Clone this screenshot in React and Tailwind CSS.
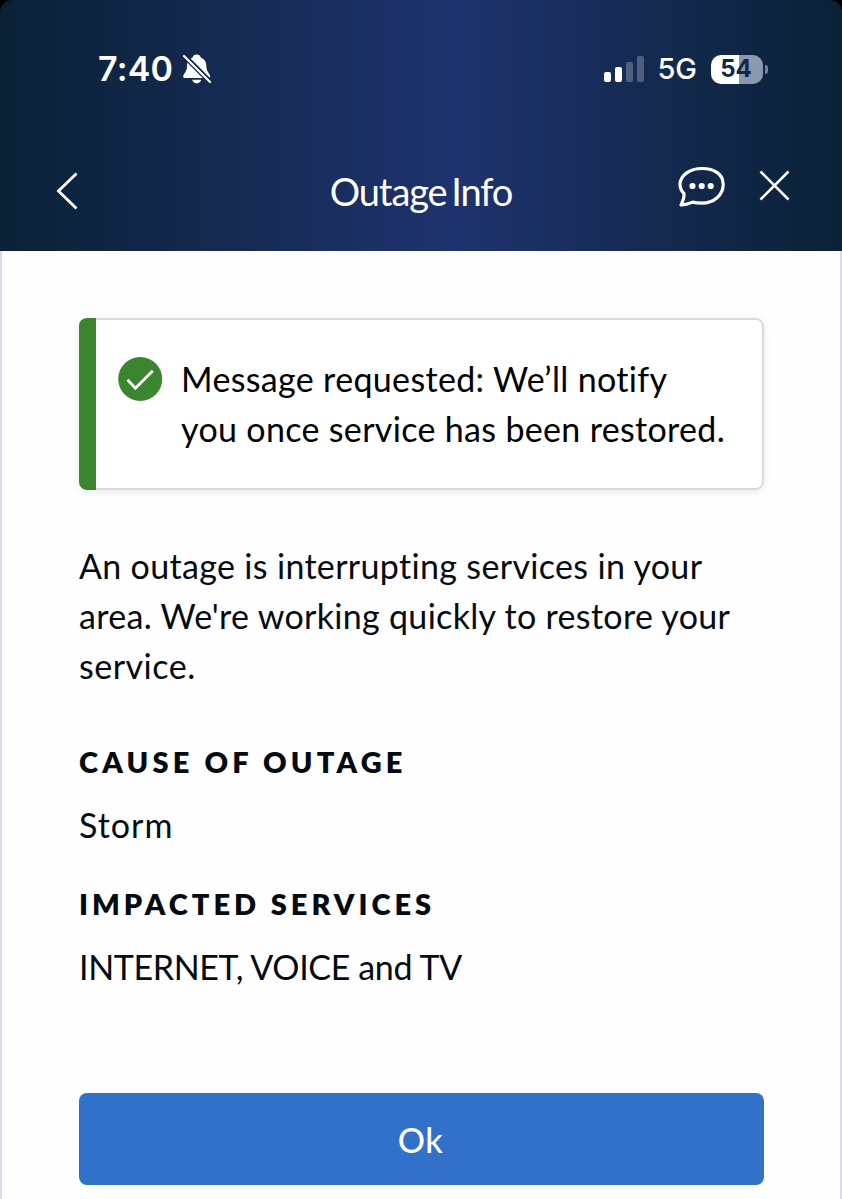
const details = [
  { title: 'CAUSE OF OUTAGE', value: 'Storm', titleClass: 'tracking-[4.2px]', valueClass: 'tracking-[1px]' },
  { title: 'IMPACTED SERVICES', value: 'INTERNET, VOICE and TV', titleClass: 'tracking-[4px]', valueClass: 'tracking-[-0.36px]' },
]

function StatusBar() {
  return (
    <div className="flex h-[138px] items-start justify-between pt-[49px] pr-[74px] pl-[98px] text-white">
      <div className="flex h-10 items-center gap-[9px]">
        <span className="font-['Inter'] text-[34px] leading-10 font-semibold tracking-[0.2px]">7:40</span>
        <svg width="30" height="32" viewBox="0 0 30 32" fill="none">
          <path d="M14.7 1.5c-2.2 0-3.7 1.2-4.1 3C6.6 6 5 9.3 5 13.400c0 5.600-3.800 6.800-3.800 10 0 1 .7 1.600 1.900 1.600h23.200c1.200 0 1.900-.6 1.900-1.600 0-3.200-3.800-4.400-3.800-10 0-4.100-1.600-7.400-5.600-8.900-.4-1.800-1.900-3-4.100-3z" fill="#fff" />
          <path d="M10.200 26.800h9c-.5 2.100-2.200 3.600-4.500 3.600s-4-1.500-4.500-3.600z" fill="#fff" />
          <path d="M1 1.600 28.500 29.100" stroke="#15284f" strokeWidth="5.200" />
          <path d="M2 3 28 29" stroke="#fff" strokeWidth="2.2" strokeLinecap="round" />
        </svg>
      </div>

      <div className="flex h-10 items-center">
        <div className="flex h-[26px] items-end gap-[4px]">
          <span className="h-[10px] w-[7px] rounded-[2px] bg-white" />
          <span className="h-[15px] w-[7px] rounded-[2px] bg-white" />
          <span className="h-[20px] w-[7px] rounded-[2px] bg-white/25" />
          <span className="h-[26px] w-[7px] rounded-[2px] bg-white/25" />
        </div>
        <span className="ml-[13px] font-['Inter'] text-[29px] leading-10 font-medium">5G</span>
        <div className="ml-[14px] flex h-[29px] w-[52px] items-center justify-center rounded-[10px] bg-linear-to-r from-white from-54% to-[#8a99ab] to-54% pr-[2px] font-['Inter'] text-[24px] leading-none font-bold text-[#12284a]">
          54
        </div>
        <span className="ml-[2px] h-[9px] w-[3px] rounded-r-full bg-[#75869b]" />
      </div>
    </div>
  )
}

function NavBar() {
  return (
    <div className="grid h-[113px] grid-cols-[1fr_auto_1fr] items-start text-white">
      <svg className="mt-[34px] ml-[56px]" width="22" height="38" viewBox="0 0 22 38" fill="none" stroke="currentColor" strokeWidth="2.8">
        <path d="M20.500 1.500 2.500 19l18 17.500" />
      </svg>
      <h1 className="mt-[29px] font-['Lato'] text-[38px] leading-[48px] tracking-[-1.100px] [word-spacing:-4px]">Outage Info</h1>
      <div className="flex justify-end gap-[33px] pr-[52px]">
        <svg className="mt-[28px]" width="49" height="42" viewBox="0 0 49 42" fill="none">
          <path
            d="M25 2.500C12.600 2.500 3 9.500 3 18.600c0 3.500 1.500 6.500 4 9.100.3 3.300-.7 6.900-3 11.300 5.100-.4 8.400-1.400 11.600-2.900 2.800.7 5.800 1 9.100 1 12.400 0 21.500-8.100 21.500-18.500S37.400 2.500 25 2.500z"
            stroke="#fff"
            strokeWidth="3.2"
            strokeLinejoin="round"
          />
          <circle cx="15.500" cy="20" r="3.1" fill="#fff" />
          <circle cx="24.700" cy="20" r="3.1" fill="#fff" />
          <circle cx="33.700" cy="20" r="3.1" fill="#fff" />
        </svg>
        <svg className="mt-[32px]" width="31" height="31" viewBox="0 0 31 31" fill="none" stroke="currentColor" strokeWidth="2.600">
          <path d="M1.500 1.500l28 28M29.500 1.500l-28 28" />
        </svg>
      </div>
    </div>
  )
}

export default function App() {
  return (
    <div className="flex h-[1199px] w-[842px] flex-col bg-black font-['Lato',sans-serif] text-[#060b12]">
      <header className="h-[251px] shrink-0 rounded-t-[12px] bg-linear-to-r from-[#0a2136] via-[#1f336f] via-54% to-[#0a2136]">
        <StatusBar />
        <NavBar />
      </header>

      <main className="flex-1 border-x-2 border-[#d8dae5] bg-[#fefefe] pt-[67px] pr-[76px] pl-[77px]">
        <div className="flex h-[172px] overflow-hidden rounded-[8px] bg-white shadow-[0_2px_8px_rgba(0,0,0,0.08)]">
          <div className="w-[17px] shrink-0 bg-[#3a852d]" />
          <div className="flex flex-1 rounded-r-[8px] border-2 border-l-0 border-[#d8dae1]">
            <svg className="mt-[37px] ml-[22px] shrink-0" width="45" height="45" viewBox="0 0 45 45" fill="none">
              <circle cx="22.200" cy="22" r="22" fill="#3a852d" />
              <path d="M9.500 22.800 17.400 31.200 34.800 13.700" stroke="#fff" strokeWidth="2.800" />
            </svg>
            <p className="mt-[34px] ml-[18px] text-[34px] leading-[50px] whitespace-nowrap text-black">
              <span className="block tracking-[0.34px]">Message requested: We’ll notify</span>
              <span className="block tracking-[0.33px]">you once service has been restored.</span>
            </p>
          </div>
        </div>

        <p className="mt-[51px] text-[34px] leading-[50px] whitespace-nowrap">
          <span className="block tracking-[0.33px]">An outage is interrupting services in your</span>
          <span className="block tracking-[0.31px]">area. We're working quickly to restore your</span>
          <span className="block tracking-[0.500px]">service.</span>
        </p>

        <dl className="mt-[46px]">
          {details.map((d) => (
            <div key={d.title} className="h-[142px]">
              <dt className={`text-[29px] leading-[50px] font-extrabold ${d.titleClass}`}>{d.title}</dt>
              <dd className={`mt-[13px] text-[34px] leading-[50px] ${d.valueClass}`}>{d.value}</dd>
            </div>
          ))}
        </dl>

        <button className="mt-[72px] block h-[92px] w-full rounded-[8px] bg-[#3171ca] pr-[2px] text-[34px] font-medium tracking-[0.500px] text-white">
          Ok
        </button>
      </main>
    </div>
  )
}
